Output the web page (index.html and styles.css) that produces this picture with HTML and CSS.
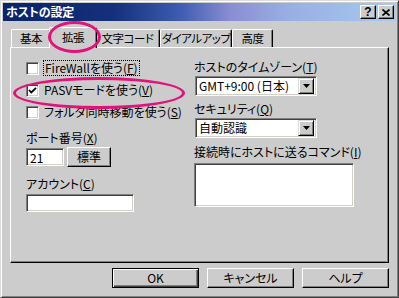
FILE: index.html
```html
<!DOCTYPE html>
<html lang="ja">
<head>
<meta charset="utf-8">
<title>ホストの設定</title>
<link rel="stylesheet" href="styles.css">
</head>
<body>
<div class="window">
  <div class="titlebar">
    <span class="title">ホストの設定</span>
    <div class="title-btns">
      <span class="tbtn tbtn-help">?</span>
      <span class="tbtn tbtn-close"><svg width="8" height="7" viewBox="0 0 8 7"><path d="M0.5 0.5 L7.5 6.5 M7.5 0.5 L0.5 6.5" stroke="#000" stroke-width="1.6" fill="none"/></svg></span>
    </div>
  </div>
  <div class="content">
    <div class="tabs">
      <div class="tab tab-basic">基本</div>
      <div class="tab tab-ext active">拡張</div>
      <div class="tab tab-code">文字コード</div>
      <div class="tab tab-dial">ダイアルアップ</div>
      <div class="tab tab-adv">高度</div>
    </div>
    <div class="panel">
      <div class="col col-left">
        <div class="check-row"><span class="checkbox"></span><span class="focus">FireWallを使う(<u>F</u>)</span></div>
        <div class="check-row"><span class="checkbox"><svg width="9" height="9" viewBox="0 0 9 9"><path d="M1 4 L3.3 6.5 L8 1.8" stroke="#000" stroke-width="1.8" fill="none"/></svg></span><span>PASVモードを使う(<u>V</u>)</span></div>
        <div class="check-row"><span class="checkbox"></span><span>フォルダ同時移動を使う(<u>S</u>)</span></div>
        <div class="label label-port">ポート番号(<u>X</u>)</div>
        <div class="port-row">
          <div class="field field-port">21</div>
          <div class="btn btn-std">標準</div>
        </div>
        <div class="label label-account">アカウント(<u>C</u>)</div>
        <div class="field field-account"></div>
      </div>
      <div class="col col-right">
        <div class="label label-tz">ホストのタイムゾーン(<u>T</u>)</div>
        <div class="combo"><span class="combo-text">GMT+9:00 (日本)</span><span class="combo-btn"><svg width="7" height="4" viewBox="0 0 7 4"><path d="M0 0 H7 L3.5 4 Z" fill="#000"/></svg></span></div>
        <div class="label label-sec">セキュリティ(<u>Q</u>)</div>
        <div class="combo"><span class="combo-text">自動認識</span><span class="combo-btn"><svg width="7" height="4" viewBox="0 0 7 4"><path d="M0 0 H7 L3.5 4 Z" fill="#000"/></svg></span></div>
        <div class="label label-cmd">接続時にホストに送るコマンド(<u>I</u>)</div>
        <div class="field field-cmd"></div>
      </div>
    </div>
    <div class="buttons">
      <div class="btn btn-dlg btn-default">OK</div>
      <div class="btn btn-dlg">キャンセル</div>
      <div class="btn btn-dlg">ヘルプ</div>
    </div>
  </div>
  <div class="mark mark-tab"></div>
  <div class="mark mark-pasv"></div>
</div>
</body>
</html>
```

FILE: styles.css
```css
html, body {
  margin: 0;
  padding: 0;
}
body {
  width: 399px;
  height: 298px;
  overflow: hidden;
  background: #cccccc;
  font-family: "Noto Sans CJK JP", "Noto Sans", sans-serif;
  font-size: 12px;
  line-height: 14px;
  font-feature-settings: "palt";
  color: #000;
}
u {
  text-decoration: underline;
  text-underline-offset: 1px;
}
.window {
  position: relative;
  box-sizing: border-box;
  width: 399px;
  height: 298px;
  border: 1px solid;
  border-color: #dcdcdc #404040 #404040 #dcdcdc;
  box-shadow: inset 1px 1px #ffffff, inset -1px -1px #808080;
  padding: 2px;
  background: #cccccc;
}
.titlebar {
  height: 18px;
  display: flex;
  align-items: center;
  justify-content: space-between;
  padding: 0 2px 0 3px;
  background: linear-gradient(90deg, #0a246a 0%, #14307a 28%, #3e5cb0 45%, #8a8ed2 58%, #98aee2 72%, #a6caf0 100%);
}
.title {
  color: #fff;
  font-weight: bold;
  font-size: 12px;
  letter-spacing: -0.2px;
}
.title-btns {
  display: flex;
  gap: 2px;
}
.tbtn {
  box-sizing: border-box;
  width: 16px;
  height: 14px;
  display: flex;
  align-items: center;
  justify-content: center;
  background: #cccccc;
  border: 1px solid;
  border-color: #ffffff #000 #000 #ffffff;
  box-shadow: inset -1px -1px #808080;
  font-family: "Liberation Sans", sans-serif;
  font-weight: bold;
  font-size: 12px;
  line-height: 12px;
}
.content {
  padding: 0 5px 0 7px;
}
.tabs {
  margin-top: 6px;
  height: 20px;
  display: flex;
  align-items: flex-end;
  padding-left: 1px;
}
.tab {
  box-sizing: border-box;
  height: 18px;
  border: 1px solid;
  border-bottom: none;
  border-color: #ffffff #000 transparent #ffffff;
  box-shadow: inset -1px 0 #808080;
  border-radius: 2px 2px 0 0;
  text-align: center;
  font-size: 11.5px;
  line-height: 16px;
  white-space: nowrap;
  letter-spacing: -0.5px;
}
.tab-basic { width: 40px; }
.tab-ext { width: 48px; }
.tab-code { width: 65px; }
.tab-dial { width: 72px; }
.tab-adv { width: 41px; }
.tab.active {
  position: relative;
  z-index: 2;
  height: 21px;
  margin: 0 -2px -1px;
  background: #cccccc;
  line-height: 19px;
}
.panel {
  position: relative;
  box-sizing: border-box;
  width: 379px;
  height: 216px;
  border: 1px solid;
  border-color: #ffffff #000 #000 #ffffff;
  box-shadow: inset -1px -1px #808080;
  display: grid;
  grid-template-columns: 168px 1fr;
  padding: 9px 0 0 15px;
}
.col {
  display: flex;
  flex-direction: column;
  align-items: flex-start;
}
.check-row {
  height: 22px;
  display: flex;
  align-items: center;
  gap: 5px;
  white-space: nowrap;
}
.checkbox {
  box-sizing: border-box;
  width: 13px;
  height: 13px;
  display: flex;
  align-items: center;
  justify-content: center;
  background: #fff;
  border: 1px solid;
  border-color: #808080 #fff #fff #808080;
  box-shadow: inset 1px 1px #404040, inset -1px -1px #d4d0c8;
}
.focus {
  outline: 1px dotted #000;
  outline-offset: 0;
  padding: 0 1px;
}
.label {
  white-space: nowrap;
}
.label-port { margin-top: 8px; }
.label-account { margin-top: 10px; }
.label-tz { margin-top: 3px; }
.label-sec { margin-top: 6px; }
.label-cmd { margin-top: 7px; }
.field {
  box-sizing: border-box;
  background: #fff;
  border: 1px solid;
  border-color: #808080 #fff #fff #808080;
  box-shadow: inset 1px 1px #404040, inset -1px -1px #d4d0c8;
}
.port-row {
  margin-top: 2px;
  height: 20px;
  display: flex;
  align-items: center;
  gap: 3px;
}
.field-port {
  width: 38px;
  height: 18px;
  padding: 1px 0 0 3px;
  line-height: 15px;
}
.field-account {
  margin-top: 3px;
  width: 108px;
  height: 18px;
}
.field-cmd {
  margin-top: 4px;
  width: 160px;
  height: 44px;
}
.combo {
  box-sizing: border-box;
  margin-top: 2px;
  margin-left: 1px;
  width: 122px;
  height: 20px;
  display: flex;
  align-items: center;
  justify-content: space-between;
  padding: 0 2px 0 3px;
  background: #fff;
  border: 1px solid;
  border-color: #808080 #fff #fff #808080;
  box-shadow: inset 1px 1px #404040, inset -1px -1px #d4d0c8;
  white-space: nowrap;
}
.combo-btn {
  box-sizing: border-box;
  width: 16px;
  height: 16px;
  display: flex;
  align-items: center;
  justify-content: center;
  background: #cccccc;
  border: 1px solid;
  border-color: #dcdcdc #000 #000 #dcdcdc;
  box-shadow: inset 1px 1px #fff, inset -1px -1px #808080;
}
.btn {
  box-sizing: border-box;
  display: flex;
  align-items: center;
  justify-content: center;
  background: #cccccc;
  border: 1px solid;
  border-color: #ffffff #000 #000 #ffffff;
  box-shadow: inset -1px -1px #808080;
  white-space: nowrap;
}
.btn-std {
  width: 44px;
  height: 20px;
}
.buttons {
  margin-top: 5px;
  padding-right: 2px;
  display: flex;
  justify-content: flex-end;
  gap: 8px;
}
.btn-dlg {
  width: 87px;
  height: 20px;
}
.btn-default {
  border: 1px solid #000;
  box-shadow: inset 1px 1px #fff, inset -1px -1px #404040, inset -2px -2px #808080;
}
.mark {
  position: absolute;
  box-sizing: border-box;
  border: 3px solid #e3127a;
  border-radius: 50%;
  z-index: 5;
}
.mark-tab {
  left: 47px;
  top: 20px;
  width: 53px;
  height: 32px;
}
.mark-pasv {
  left: 12px;
  top: 76px;
  width: 172px;
  height: 32px;
}
```
